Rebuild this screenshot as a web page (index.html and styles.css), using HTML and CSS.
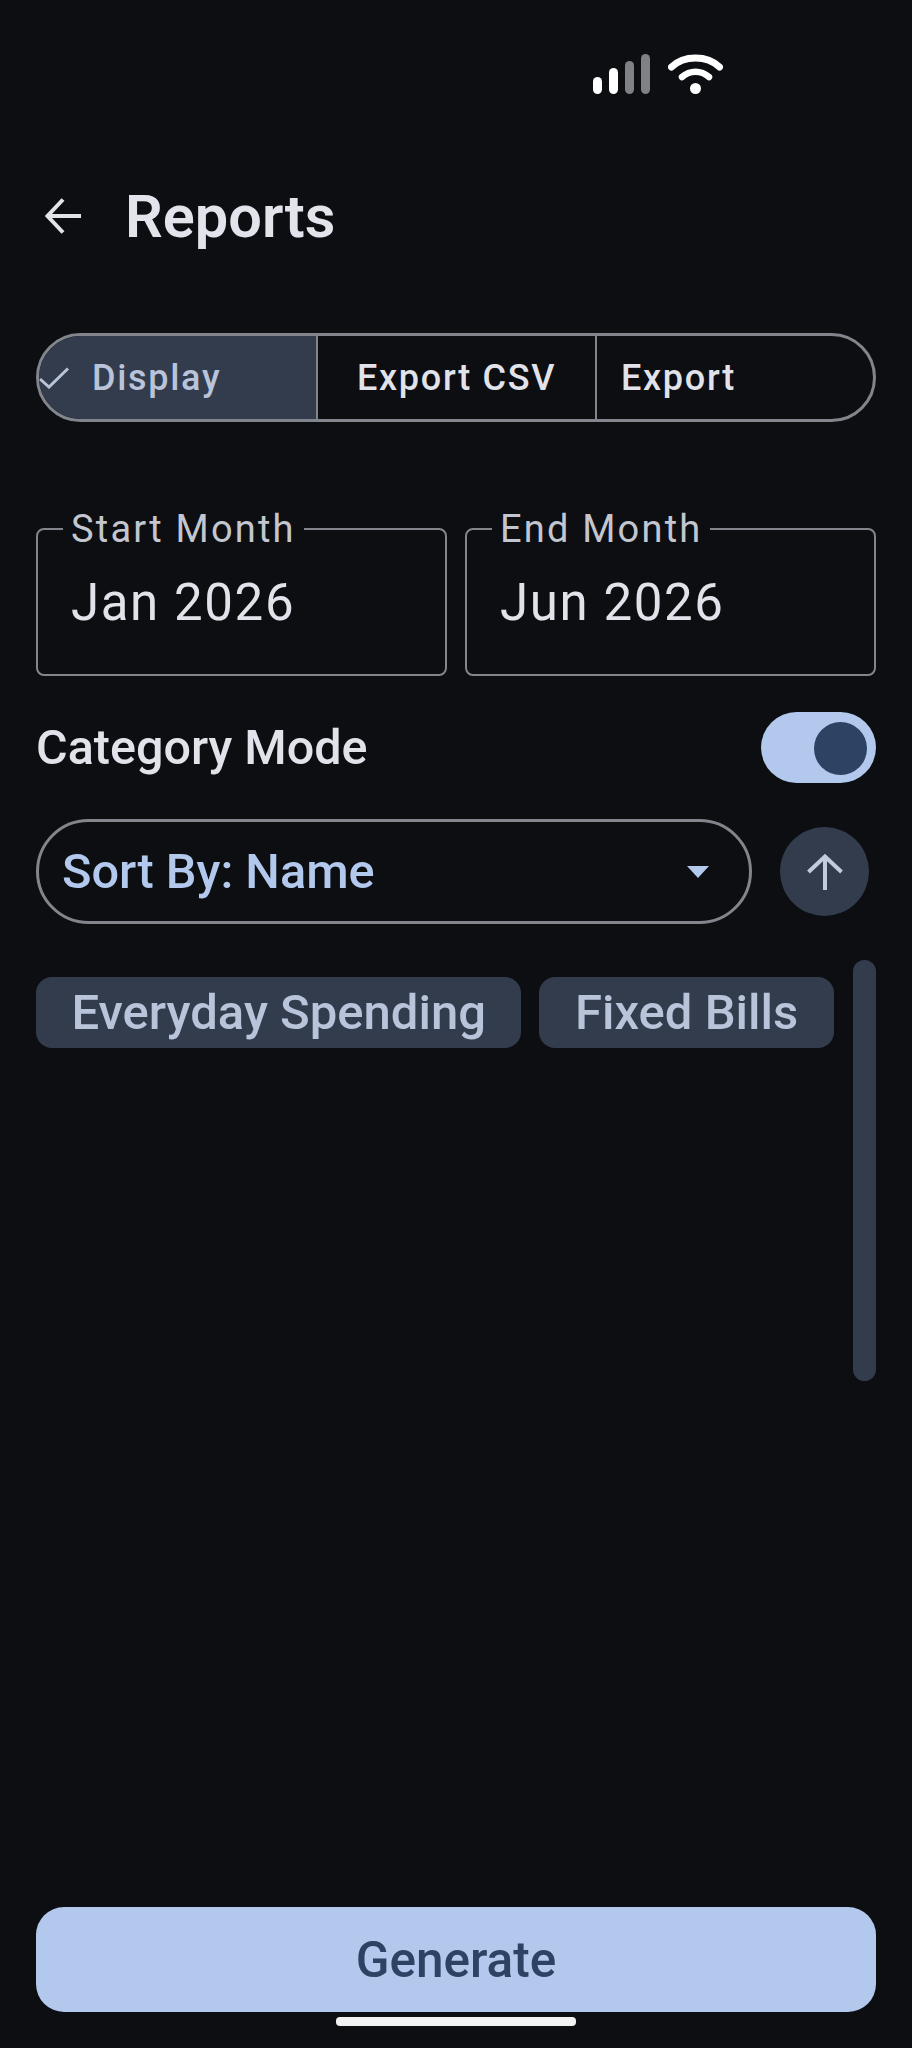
FILE: index.html
```html
<!DOCTYPE html>
<html lang="en">
<head>
  <meta charset="UTF-8">
  <title>Reports</title>
  <link rel="stylesheet" href="styles.css">
</head>
<body>
  <div class="screen">

    <div class="status-bar">
      <div class="signal">
        <span class="bar bar-1"></span>
        <span class="bar bar-2"></span>
        <span class="bar bar-3"></span>
        <span class="bar bar-4"></span>
      </div>
      <svg class="wifi" width="55" height="40" viewBox="0 0 55 40" fill="none" stroke="#fff" stroke-linecap="round">
        <path d="M3.5 13 C16 1 39 1 51.5 13" stroke-width="7"/>
        <path d="M14 23 C22 16 33 16 41 23" stroke-width="6.5"/>
        <circle cx="27.5" cy="34.5" r="5.5" fill="#fff" stroke="none"/>
      </svg>
    </div>

    <header class="top-bar">
      <svg class="back" width="36" height="36" viewBox="0 0 36 36" fill="none" stroke="#e3e3ea" stroke-width="4">
        <path d="M36 18 H3"/>
        <path d="M18 1.5 L2.5 18 L18 34.5"/>
      </svg>
      <h1>Reports</h1>
    </header>

    <div class="segments">
      <div class="segment selected">
        <svg class="check" width="30" height="22" viewBox="0 0 30 22" fill="none" stroke="#b9c3d9" stroke-width="3">
          <path d="M1 12 L10 20 L29 1.5"/>
        </svg>
        Display
      </div>
      <div class="segment middle">Export CSV</div>
      <div class="segment last">Export</div>
    </div>

    <div class="fields">
      <fieldset class="field">
        <legend>Start Month</legend>
        <div class="value">Jan 2026</div>
      </fieldset>
      <fieldset class="field">
        <legend>End Month</legend>
        <div class="value">Jun 2026</div>
      </fieldset>
    </div>

    <div class="mode-row">
      <span class="mode-label">Category Mode</span>
      <div class="switch"><span class="thumb"></span></div>
    </div>

    <div class="sort-row">
      <div class="sort-select">
        <span>Sort By: Name</span>
        <span class="caret"></span>
      </div>
      <button class="sort-dir">
        <svg width="36" height="36" viewBox="0 0 36 36" fill="none" stroke="#c3cbdd" stroke-width="4">
          <path d="M18 36 V3"/>
          <path d="M1.5 18 L18 2.5 L34.5 18"/>
        </svg>
      </button>
    </div>

    <div class="chip-area">
      <div class="chips">
        <span class="chip">Everyday Spending</span>
        <span class="chip">Fixed Bills</span>
      </div>
      <div class="scrollbar"></div>
    </div>

    <button class="generate">Generate</button>
    <div class="home-bar"></div>

  </div>
</body>
</html>
```

FILE: styles.css
```css
* {
  box-sizing: border-box;
}
body {
  margin: 0;
  background-color: #0c0e12;
  font-family: Roboto, "Liberation Sans", sans-serif;
  color: #e2e3ea;
}
.screen {
  height: 2048px;
  padding: 54px 36px 22px;
  display: flex;
  flex-direction: column;
}

/* status bar */
.status-bar {
  height: 40px;
  padding-left: 557px;
  display: flex;
  align-items: flex-end;
  gap: 18px;
}
.signal {
  display: flex;
  align-items: flex-end;
  gap: 7px;
}
.bar {
  width: 9px;
  border-radius: 5px;
  background: #fff;
}
.bar-1 { height: 17px; }
.bar-2 { height: 26px; }
.bar-3 { height: 33px; background: #808184; }
.bar-4 { height: 40px; background: #808184; }

/* header */
.top-bar {
  margin-top: 92px;
  height: 60px;
  padding-left: 9px;
  display: flex;
  align-items: center;
  gap: 44px;
}
h1 {
  margin: 2px 0 0;
  font-size: 59.5px;
  font-weight: 600;
  line-height: 60px;
  color: #e3e3ec;
}

/* segmented buttons */
.segments {
  margin-top: 87px;
  height: 89px;
  display: flex;
  border: 3px solid #83858c;
  border-radius: 45px;
  overflow: hidden;
}
.segment {
  display: flex;
  align-items: center;
  font-size: 36px;
  font-weight: 500;
  letter-spacing: 1.7px;
}
.segment.selected {
  flex: 0 0 277px;
  position: relative;
  background: #333c4d;
  color: #b9c3d9;
  padding-left: 53px;
}
.segment.middle {
  flex: 0 0 281px;
  padding-left: 39px;
  border-left: 2px solid #83858c;
  border-right: 2px solid #83858c;
}
.segment.last {
  flex: 1;
  padding-left: 24px;
}
.check {
  position: absolute;
  left: 0;
  top: 31px;
}

/* month fields */
.fields {
  margin-top: 88px;
  display: flex;
  gap: 18px;
}
.field {
  flex: 1;
  margin: 0;
  min-width: 0;
  height: 166px;
  padding: 0 33px;
  border: 2px solid #83858c;
  border-radius: 8px;
}
.field legend {
  margin-left: -8px;
  padding: 0 8px;
  font-size: 38px;
  line-height: 38px;
  letter-spacing: 2.2px;
  color: #c3c6cf;
}
.value {
  margin-top: 25px;
  font-size: 51px;
  line-height: 60px;
  letter-spacing: 1.6px;
  color: #e2e3ea;
}

/* category mode */
.mode-row {
  margin-top: 36px;
  display: flex;
  align-items: center;
  justify-content: space-between;
}
.mode-label {
  font-size: 48.5px;
  font-weight: 500;
}
.switch {
  width: 115px;
  height: 71px;
  border-radius: 36px;
  background: #b2c8ec;
  padding: 10px 9px;
  display: flex;
  justify-content: flex-end;
}
.thumb {
  width: 53px;
  height: 53px;
  border-radius: 50%;
  background: #2d4364;
}

/* sort */
.sort-row {
  margin-top: 36px;
  display: flex;
  align-items: center;
  gap: 28px;
}
.sort-select {
  width: 716px;
  height: 105px;
  padding: 0 40px 0 23px;
  display: flex;
  align-items: center;
  justify-content: space-between;
  border: 3px solid #83858c;
  border-radius: 53px;
  font-size: 48.7px;
  font-weight: 500;
  color: #b2c8ec;
}
.caret {
  border-left: 11px solid transparent;
  border-right: 11px solid transparent;
  border-top: 12px solid #b2c8ec;
}
.sort-dir {
  width: 89px;
  height: 89px;
  padding: 0;
  border: 0;
  border-radius: 50%;
  background: #333c4d;
  display: flex;
  align-items: center;
  justify-content: center;
}

/* chips */
.chip-area {
  margin-top: 36px;
  height: 421px;
  display: flex;
  justify-content: space-between;
}
.chips {
  padding-top: 17px;
  display: flex;
  align-items: flex-start;
  gap: 18px;
}
.chip {
  height: 71px;
  padding: 0 35.5px;
  display: flex;
  align-items: center;
  border-radius: 16px;
  background: #333c4d;
  color: #b9c3d9;
  font-size: 49px;
  font-weight: 500;
}
.scrollbar {
  width: 23px;
  border-radius: 12px;
  background: #333c4d;
}

/* bottom */
.generate {
  margin-top: auto;
  height: 105px;
  border: 0;
  border-radius: 28px;
  background: #b2c8ec;
  color: #2d4364;
  font-family: inherit;
  font-size: 49.5px;
  font-weight: 500;
}
.home-bar {
  margin: 5px auto 0;
  width: 240px;
  height: 9px;
  border-radius: 4px;
  background: #f2f2f2;
}
```
